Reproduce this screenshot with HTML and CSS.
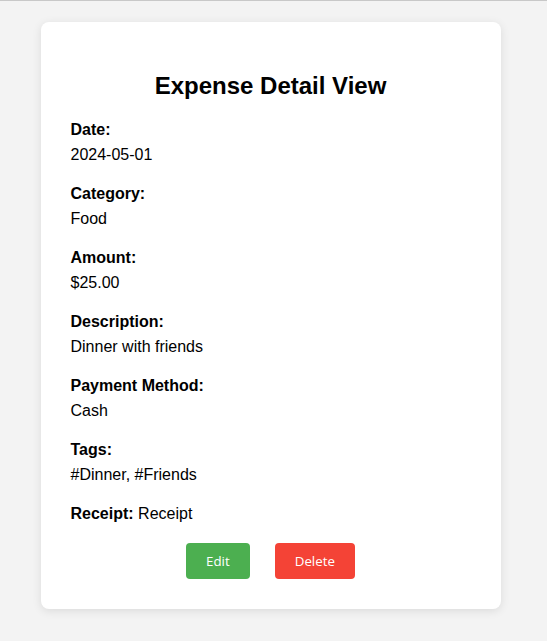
FILE: index.html
```html
<!DOCTYPE html>
<html lang="en">
<head>
<meta charset="utf-8">
<title>Expense Detail View</title>
<link rel="stylesheet" href="styles.css">
</head>
<body>
<div class="page">
  <div class="card">
    <h2 class="title">Expense Detail View</h2>
    <div class="detail"><span class="label">Date:</span><span class="value">2024-05-01</span></div>
    <div class="detail"><span class="label">Category:</span><span class="value">Food</span></div>
    <div class="detail"><span class="label">Amount:</span><span class="value">$25.00</span></div>
    <div class="detail"><span class="label">Description:</span><span class="value">Dinner with friends</span></div>
    <div class="detail"><span class="label">Payment Method:</span><span class="value">Cash</span></div>
    <div class="detail"><span class="label">Tags:</span><span class="value">#Dinner, #Friends</span></div>
    <div class="detail inline"><span class="label">Receipt:</span> <span class="value">Receipt</span></div>
    <div class="actions">
      <button class="btn btn-edit">Edit</button>
      <button class="btn btn-delete">Delete</button>
    </div>
  </div>
</div>
</body>
</html>
```
FILE: styles.css
```css
html {
  background: #f3f3f3;
}
body {
  margin: 0;
  border-top: 1px solid #c8c8c8;
  font-family: "Liberation Sans", Arial, sans-serif;
  font-size: 16px;
  color: #000;
  background: #f3f3f3;
}
.page {
  padding: 21px 6px 33px 0;
}
.card {
  width: 400px;
  margin: 0 auto;
  background: #fff;
  padding: 30px;
  border-radius: 8px;
  box-shadow: 0 2px 10px rgba(0, 0, 0, 0.1);
}
.title {
  font-size: 24px;
  font-weight: bold;
  text-align: center;
  margin: 20px 0 17px;
}
.detail {
  line-height: 25px;
  margin-bottom: 14px;
}
.detail .label {
  display: block;
  font-weight: bold;
}
.detail .value {
  display: block;
}
.detail.inline .label,
.detail.inline .value {
  display: inline;
}
.actions {
  display: flex;
  justify-content: center;
  gap: 25px;
  padding-top: 3px;
}
.btn {
  font-family: "Open Sans", sans-serif;
  font-size: 13.333px;
  line-height: 16px;
  color: #fff;
  border: none;
  border-radius: 4px;
  padding: 10px 20px;
  cursor: pointer;
}
.btn-edit {
  background: #4caf50;
}
.btn-delete {
  background: #f44336;
}
```
